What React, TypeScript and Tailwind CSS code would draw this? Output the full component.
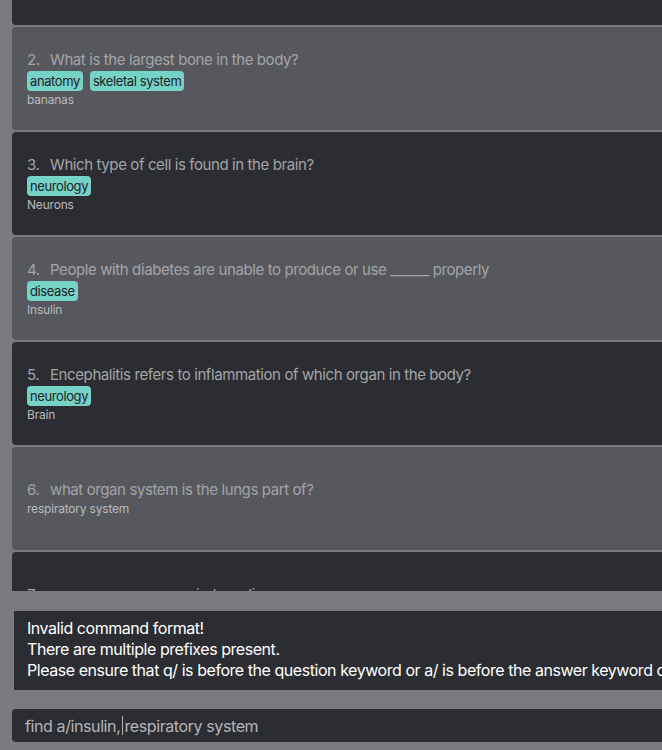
import React from "react";

type Card = { idx: number; q: string; tags: string[]; a: string };

const cards: Card[] = [
  { idx: 1, q: "What is the function of the heart?", tags: [], a: "Pump blood" },
  { idx: 2, q: "What is the largest bone in the body?", tags: ["anatomy", "skeletal system"], a: "bananas" },
  { idx: 3, q: "Which type of cell is found in the brain?", tags: ["neurology"], a: "Neurons" },
  { idx: 4, q: "People with diabetes are unable to produce or use ______ properly", tags: ["disease"], a: "Insulin" },
  { idx: 5, q: "Encephalitis refers to inflammation of which organ in the body?", tags: ["neurology"], a: "Brain" },
  { idx: 6, q: "what organ system is the lungs part of?", tags: [], a: "respiratory system" },
  { idx: 7, q: "name a common respiratory disease", tags: [], a: "asthma" },
];

function FlashCard({ card }: { card: Card }) {
  const dark = card.idx % 2 === 1;
  return (
    <div
      className={`h-[103px] w-[720px] shrink-0 rounded-[4px] flex flex-col justify-center pl-[15px] ${
        dark ? "bg-[#2c2d32]" : "bg-[#57585d]"
      }`}
    >
      <div className="flex text-[15px] leading-[20px] text-[#a3a4a8] tracking-[-0.4px]">
        <span className="w-[23px]">{card.idx}.</span>
        <span>{card.q}</span>
      </div>
      {card.tags.length > 0 && (
        <div className="flex gap-[7px] mt-[1px]">
          {card.tags.map((t) => (
            <span
              key={t}
              className="bg-[#74d2c6] text-[#1f2426] text-[13px] leading-[20px] px-[3px] rounded-[4px] tracking-[-0.4px]"
            >
              {t}
            </span>
          ))}
        </div>
      )}
      <div className="text-[12px] leading-[17px] text-[#b9babd] tracking-[-0.2px]">{card.a}</div>
    </div>
  );
}

export default function App() {
  return (
    <div
      className="w-[662px] h-[750px] bg-[#7a7b7f] overflow-hidden flex flex-col"
      style={{ fontFamily: "Inter, 'Noto Sans', sans-serif" }}
    >
      <div className="h-[591px] overflow-hidden pl-[12px]">
        <div className="flex flex-col gap-[2px] -mt-[78px]">
          {cards.map((c) => (
            <FlashCard key={c.idx} card={c} />
          ))}
        </div>
      </div>

      <div className="mt-[20px] ml-[14px] h-[79px] w-[700px] bg-[#2c2d32] pl-[13px] pt-[7px] text-white text-[16px] leading-[21px] tracking-[-0.45px] whitespace-nowrap">
        <div>Invalid command format!</div>
        <div>There are multiple prefixes present.</div>
        <div>Please ensure that q/ is before the question keyword or a/ is before the answer keyword or both</div>
      </div>

      <div className="mt-[19px] ml-[12px] h-[33px] w-[700px] bg-[#2c2d32] rounded-[4px] flex items-center pl-[13px] text-[16px] text-[#b4b5b8] tracking-[-0.4px]">
        <span>find a/insulin,&nbsp;</span>
        <span className="w-[1px] h-[19px] bg-[#b4b5b8] -ml-[2px] mr-[1px]" />
        <span>respiratory system</span>
      </div>
    </div>
  );
}
